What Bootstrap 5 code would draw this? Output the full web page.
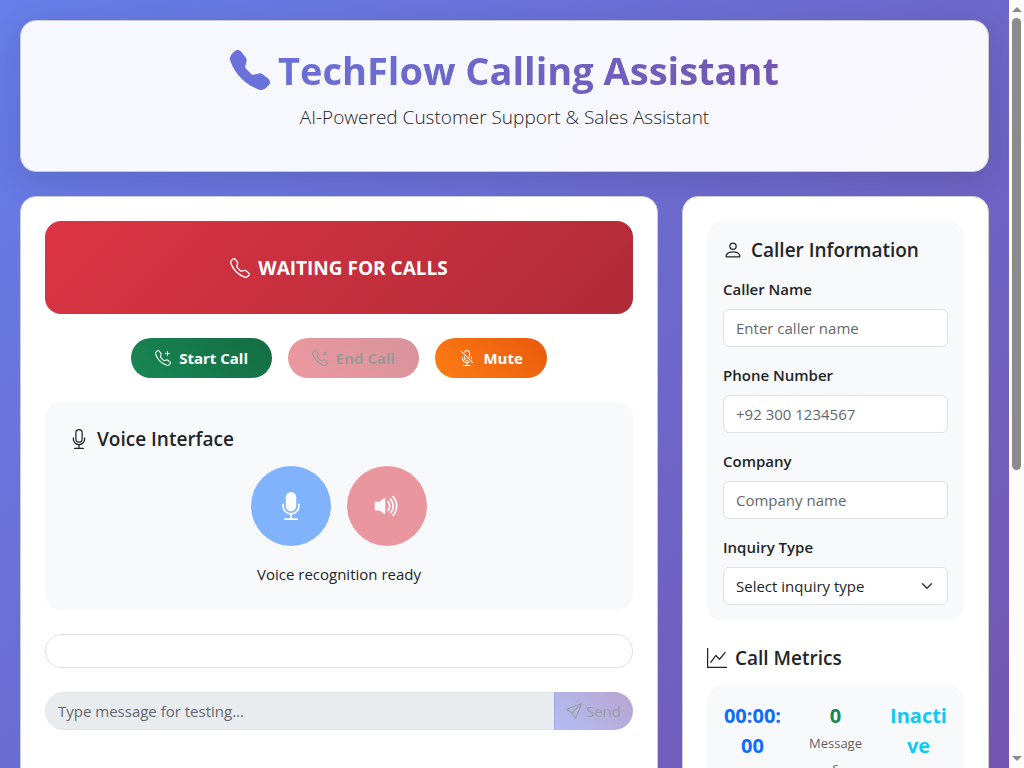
<!DOCTYPE html>
<html lang="en">
<head>
<meta charset="utf-8">
<meta name="viewport" content="width=device-width, initial-scale=1">
<title>TechFlow Calling Assistant</title>
<link href="https://cdn.jsdelivr.net/npm/bootstrap@5.3.0/dist/css/bootstrap.min.css" rel="stylesheet">
<style>
body{font-family:"Open Sans","Noto Sans",sans-serif;font-size:15px;line-height:24px}
.scroller{overflow-y:auto;scrollbar-width:none;min-width:0}
.scroller::-webkit-scrollbar{display:none}
.backdrop{min-height:162vh;padding:20px;background:linear-gradient(135deg,#667eea,#764ba2)}
.panel-card{border-radius:16px;border-color:#ccc}
.panel-card>.card-body{padding:24px}
.hero{background:rgba(255,255,255,.95);box-shadow:0 8px 32px rgba(0,0,0,.12)}
.hero h1{font-size:38px;line-height:50px;font-weight:700;background:linear-gradient(135deg,#667eea,#764ba2);-webkit-background-clip:text;background-clip:text;color:transparent}
.hero h1 svg{width:40px;height:40px;fill:#6a71db;vertical-align:-5px}
.tagline{font-size:19px;line-height:28px;font-weight:300}
svg{width:16px;height:16px;fill:currentColor;flex-shrink:0}
h2{font-size:19px;line-height:26px;font-weight:600;margin-bottom:14px}
h2 svg{width:20px;height:20px}
.state{height:93px;border-radius:16px;font-size:19px;font-weight:700;background:linear-gradient(135deg,#dc3545,#b02a37)}
.state svg{width:20px;height:20px}
.action{height:40px;padding:0 24px;border:0;font-size:15px;font-weight:700}
.action,.action:hover,.action:disabled{color:#fff}
.action-start{background:linear-gradient(45deg,#198754,#146c43)}
.action-end{background:linear-gradient(45deg,#dc3545,#b02a37)}
.action-mute{background:linear-gradient(45deg,#fd7e14,#e8590c)}
.action-end:disabled{opacity:.5;color:#343434}
.soft{background:#f8f9fb;border-radius:16px}
.round{width:80px;height:80px;border:0}
.round:disabled{opacity:.5}
.round svg{width:28px;height:28px;fill:#fff}
.log{height:34px;border-radius:16px}
.form-control,.form-select{font-size:15px;height:38px;border-color:#dee2e6}
.form-label{font-weight:600;font-size:15px}
.form-control::placeholder{color:#62686e}
.composer .form-control{border-radius:19px 0 0 19px}
.composer .btn{border-radius:0 19px 19px 0;border:0;padding:0 12px;font-size:15px;background:linear-gradient(45deg,#667eea,#764ba2)}
.composer .btn:disabled{opacity:.5;color:#343a40}
.figure-value{font-size:20px;line-height:30px;font-weight:700}
.figure-label{font-size:13px;line-height:24px}
.track{width:15px;background:#fcfcfc;padding:7px 0;color:#8b8b8b}
.track .arrow{width:10px;height:5px}
.thumb{width:9px;height:60%;border-radius:5px;background:#8b8b8b;margin-top:6px}
</style>
</head>
<body>
<div class="d-flex vh-100">
<div class="scroller flex-grow-1">
<div class="backdrop d-flex flex-column">
  <header class="card panel-card hero mb-4">
    <div class="card-body text-center">
      <h1 class="mb-2"><svg class="me-2" viewBox="0 0 16 16" aria-hidden="true"><path fill-rule="evenodd" d="M1.885.511a1.745 1.745 0 0 1 2.61.163L6.29 2.98c.329.423.445.974.315 1.494l-.547 2.19a.678.678 0 0 0 .178.643l2.457 2.457a.678.678 0 0 0 .644.178l2.189-.547a1.745 1.745 0 0 1 1.494.315l2.306 1.794c.829.645.905 1.87.163 2.611l-1.034 1.034c-.74.74-1.846 1.065-2.877.702a18.634 18.634 0 0 1-7.01-4.42 18.634 18.634 0 0 1-4.42-7.009c-.362-1.03-.037-2.137.703-2.877L1.885.511z"/></svg>TechFlow Calling Assistant</h1>
      <p class="tagline mb-3">AI-Powered Customer Support &amp; Sales Assistant</p>
    </div>
  </header>
  <main class="row flex-grow-1">
    <div class="col-8">
      <section class="card panel-card h-100">
        <div class="card-body">
          <div class="state d-flex align-items-center justify-content-center gap-2 text-white mb-4" role="status"><svg viewBox="0 0 16 16" aria-hidden="true"><use href="#tel"/></svg>WAITING FOR CALLS</div>
          <div class="d-flex justify-content-center gap-3 mb-4">
            <button type="button" class="btn rounded-pill action action-start d-flex align-items-center gap-2"><svg viewBox="0 0 16 16" aria-hidden="true"><use href="#tel"/><path fill-rule="evenodd" d="M12.5 1a.5.5 0 0 1 .5.5V3h1.500a.5.5 0 0 1 0 1H13v1.500a.5.5 0 0 1-1 0V4h-1.500a.5.5 0 0 1 0-1H12V1.500a.5.5 0 0 1 .5-.5z"/></svg>Start Call</button>
            <button type="button" class="btn rounded-pill action action-end d-flex align-items-center gap-2" disabled><svg viewBox="0 0 16 16" aria-hidden="true"><use href="#tel"/><path fill-rule="evenodd" d="M11.146 1.646a.5.5 0 0 1 .708 0L13 2.793l1.146-1.147a.5.5 0 0 1 .708.708L13.707 3.500l1.147 1.146a.5.5 0 0 1-.708.708L13 4.207l-1.146 1.147a.5.5 0 0 1-.708-.708L12.293 3.500l-1.147-1.146a.5.5 0 0 1 0-.708z"/></svg>End Call</button>
            <button type="button" class="btn rounded-pill action action-mute d-flex align-items-center gap-2"><svg viewBox="0 0 16 16" aria-hidden="true"><path d="M13 8c0 .564-.094 1.107-.266 1.613l-.814-.814A4.020 4.020 0 0 0 12 8V7a.5.5 0 0 1 1 0v1zm-5 4c.818 0 1.578-.245 2.212-.667l.718.719a4.973 4.973 0 0 1-2.430.923V15h3a.5.5 0 0 1 0 1h-7a.5.5 0 0 1 0-1h3v-2.025A5 5 0 0 1 3 8V7a.5.5 0 0 1 1 0v1a4 4 0 0 0 4 4zm3-9v4.879l-1-1V3a2 2 0 0 0-3.997-.118l-.845-.845A3.001 3.001 0 0 1 11 3z"/><path d="m9.486 10.607-.748-.748A2 2 0 0 1 6 8v-.878l-1-1V8a3 3 0 0 0 4.486 2.607zm-7.840-9.253 12 12 .708-.708-12-12-.708.708z"/></svg>Mute</button>
          </div>
          <div class="soft p-4 mb-4">
            <h2 class="d-flex align-items-center gap-2"><svg viewBox="0 0 16 16" aria-hidden="true"><use href="#mic-stand"/><path d="M10 8a2 2 0 1 1-4 0V3a2 2 0 1 1 4 0v5zM8 0a3 3 0 0 0-3 3v5a3 3 0 0 0 6 0V3a3 3 0 0 0-3-3z"/></svg>Voice Interface</h2>
            <div class="d-flex justify-content-center gap-3 mb-3">
              <button type="button" class="btn btn-primary rounded-circle round p-0" disabled aria-label="Speak"><svg viewBox="0 0 16 16" aria-hidden="true"><path d="M5 3a3 3 0 0 1 6 0v5a3 3 0 0 1-6 0V3z"/><use href="#mic-stand"/></svg></button>
              <button type="button" class="btn btn-danger rounded-circle round p-0" disabled aria-label="Stop speaking"><svg viewBox="0 0 16 16" aria-hidden="true"><path d="M11.536 14.010A8.473 8.473 0 0 0 14.026 8a8.473 8.473 0 0 0-2.490-6.010l-.708.707A7.476 7.476 0 0 1 13.025 8c0 2.071-.840 3.946-2.197 5.303l.708.707z"/><path d="M10.121 12.596A6.480 6.480 0 0 0 12.025 8a6.480 6.480 0 0 0-1.904-4.596l-.707.707A5.483 5.483 0 0 1 11.025 8a5.483 5.483 0 0 1-1.610 3.890l.706.706z"/><path d="M8.707 11.182A4.486 4.486 0 0 0 10.025 8a4.486 4.486 0 0 0-1.318-3.182L8 5.525A3.489 3.489 0 0 1 9.025 8 3.490 3.490 0 0 1 8 10.475l.707.707zM6.717 3.550A.5.5 0 0 1 7 4v8a.5.5 0 0 1-.812.390L3.825 10.500H1.500A.5.5 0 0 1 1 10V6a.5.5 0 0 1 .5-.5h2.325l2.363-1.890a.5.5 0 0 1 .529-.060z"/></svg></button>
            </div>
            <div class="text-center">Voice recognition ready</div>
          </div>
          <div class="log border mb-4"></div>
          <div class="input-group composer">
            <input type="text" class="form-control" placeholder="Type message for testing..." aria-label="Message" disabled>
            <button type="button" class="btn d-flex align-items-center gap-1" disabled><svg viewBox="0 0 16 16" aria-hidden="true"><path d="M15.854.146a.5.5 0 0 1 .110.540l-5.819 14.547a.750.750 0 0 1-1.329.124l-3.178-4.995L.643 7.184a.750.750 0 0 1 .124-1.330L15.314.037a.5.5 0 0 1 .540.110ZM6.636 10.070l2.761 4.338L14.130 2.576 6.636 10.070Zm6.787-8.201L1.591 6.602l4.339 2.760 7.494-7.493Z"/></svg>Send</button>
          </div>
        </div>
      </section>
    </div>
    <div class="col-4">
      <aside class="card panel-card h-100">
        <div class="card-body">
          <form class="soft p-3 mb-4">
            <h2 class="d-flex align-items-center gap-2"><svg viewBox="0 0 16 16" aria-hidden="true"><path d="M8 8a3 3 0 1 0 0-6 3 3 0 0 0 0 6Zm2-3a2 2 0 1 1-4 0 2 2 0 0 1 4 0Zm4 8c0 1-1 1-1 1H3s-1 0-1-1 1-4 6-4 6 3 6 4Zm-1-.004c-.001-.246-.154-.986-.832-1.664C11.516 10.680 10.289 10 8 10c-2.290 0-3.516.680-4.168 1.332-.678.678-.830 1.418-.832 1.664h10Z"/></svg>Caller Information</h2>
            <div class="mb-3"><label class="form-label d-block" for="caller">Caller Name</label><input id="caller" type="text" class="form-control" placeholder="Enter caller name"></div>
            <div class="mb-3"><label class="form-label d-block" for="phone">Phone Number</label><input id="phone" type="tel" class="form-control" placeholder="+92 300 1234567"></div>
            <div class="mb-3"><label class="form-label d-block" for="company">Company</label><input id="company" type="text" class="form-control" placeholder="Company name"></div>
            <div><label class="form-label d-block" for="inquiry">Inquiry Type</label><select id="inquiry" class="form-select"><option>Select inquiry type</option></select></div>
          </form>
          <h2 class="d-flex align-items-center gap-2"><svg viewBox="0 0 16 16" aria-hidden="true"><path fill-rule="evenodd" d="M0 0h1v15h15v1H0V0Zm14.817 3.113a.5.5 0 0 1 .070.704l-4.500 5.500a.5.5 0 0 1-.740.037L7.060 6.767l-3.656 5.027a.5.5 0 0 1-.808-.588l4-5.500a.5.5 0 0 1 .758-.060l2.609 2.610 4.150-5.073a.5.5 0 0 1 .704-.070Z"/></svg>Call Metrics</h2>
          <div class="soft p-3">
            <div class="row text-center">
              <div class="col-4"><div class="figure-value text-primary">00:00:<wbr>00</div><div class="figure-label text-muted">Duration</div></div>
              <div class="col-4"><div class="figure-value text-success">0</div><div class="figure-label text-muted">Message<wbr>s</div></div>
              <div class="col-4"><div class="figure-value text-info">Inacti<wbr>ve</div><div class="figure-label text-muted">Status</div></div>
            </div>
          </div>
        </div>
      </aside>
    </div>
  </main>
</div>
</div>
<div class="track d-flex flex-column align-items-center flex-shrink-0" aria-hidden="true">
  <svg class="arrow" viewBox="0 0 10 5"><path d="M0 5 5 0l5 5z"/></svg>
  <div class="thumb"></div>
  <svg class="arrow mt-auto" viewBox="0 0 10 5"><path d="M0 0h10L5 5z"/></svg>
</div>
</div>
<svg class="d-none" aria-hidden="true"><defs>
  <path id="tel" d="M3.654 1.328a.678.678 0 0 0-1.015-.063L1.605 2.300c-.483.484-.661 1.169-.450 1.770a17.568 17.568 0 0 0 4.168 6.608 17.569 17.569 0 0 0 6.608 4.168c.601.211 1.286.033 1.770-.450l1.034-1.034a.678.678 0 0 0-.063-1.015l-2.307-1.794a.678.678 0 0 0-.580-.122l-2.190.547a1.745 1.745 0 0 1-1.657-.459L5.482 8.062a1.745 1.745 0 0 1-.460-1.657l.548-2.190a.678.678 0 0 0-.122-.580L3.654 1.328zM1.884.511a1.745 1.745 0 0 1 2.612.163L6.290 2.980c.329.423.445.974.315 1.494l-.547 2.190a.678.678 0 0 0 .178.643l2.457 2.457a.678.678 0 0 0 .644.178l2.189-.547a1.745 1.745 0 0 1 1.494.315l2.306 1.794c.829.645.905 1.870.163 2.611l-1.034 1.034c-.740.740-1.846 1.065-2.877.702a18.634 18.634 0 0 1-7.010-4.420 18.634 18.634 0 0 1-4.420-7.009c-.362-1.030-.037-2.137.703-2.877L1.885.511z"/>
  <path id="mic-stand" d="M3.500 6.500A.5.5 0 0 1 4 7v1a4 4 0 0 0 8 0V7a.5.5 0 0 1 1 0v1a5 5 0 0 1-4.500 4.975V15h3a.5.5 0 0 1 0 1h-7a.5.5 0 0 1 0-1h3v-2.025A5 5 0 0 1 3 8V7a.5.5 0 0 1 .5-.5z"/>
</defs></svg>
<script src="https://cdn.jsdelivr.net/npm/bootstrap@5.3.0/dist/js/bootstrap.bundle.min.js"></script>
</body>
</html>
